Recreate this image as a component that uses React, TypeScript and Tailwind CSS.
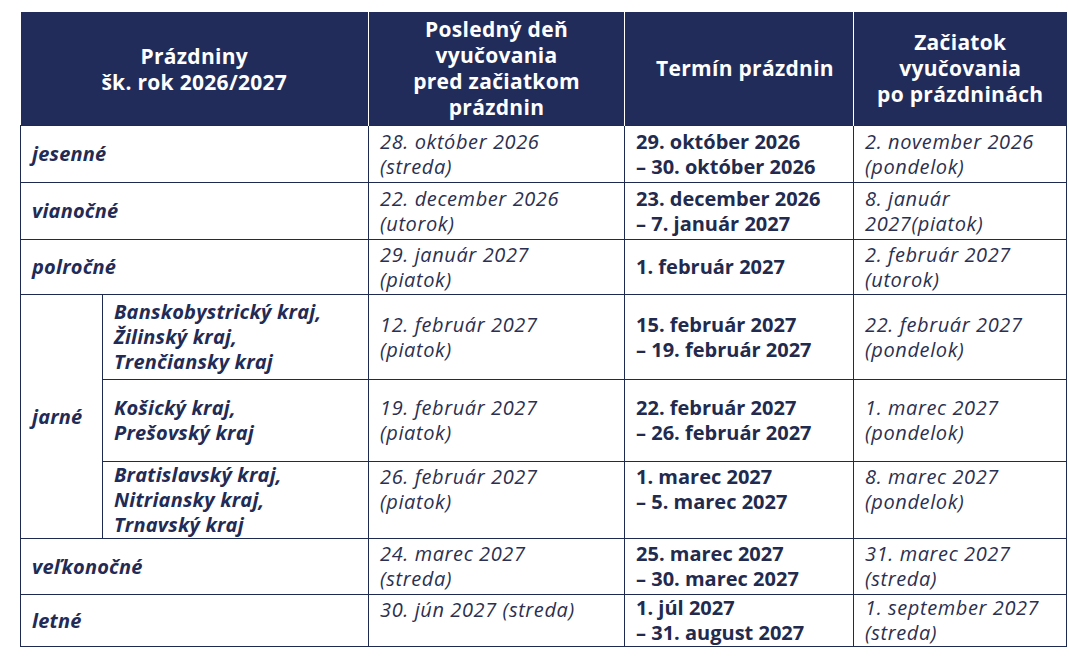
import React from "react";

const F = { fontFamily: '"Open Sans", "Liberation Sans", sans-serif' };

function It({ children }: { children: React.ReactNode }) {
  return <div className="italic text-[#2b3050] text-[20px] leading-[25px] tracking-[0.6px]">{children}</div>;
}
function Bd({ children }: { children: React.ReactNode }) {
  return <div className="font-bold text-[#222a4e] text-[20px] leading-[25px]">{children}</div>;
}
function Lb({ children }: { children: React.ReactNode }) {
  return <div className="font-bold italic text-[#222b55] text-[20px] leading-[25px] tracking-[0.2px]">{children}</div>;
}

const td = "border border-[#1e2a50] px-[11px] py-0 align-middle";
const tdTop = "border border-[#1e2a50] px-[11px] pt-[2px] pb-0 align-top";

export default function App() {
  return (
    <div className="w-[1069px] h-[657px] bg-white pt-[12px] pl-[20px]" style={F}>
      <table className="border-collapse table-fixed w-[1046px]">
        <colgroup>
          <col className="w-[82px]" />
          <col className="w-[266px]" />
          <col className="w-[256px]" />
          <col className="w-[229px]" />
          <col className="w-[213px]" />
        </colgroup>
        <thead>
          <tr className="h-[113px] bg-[#212c5b] text-white text-[21px] leading-[26px] tracking-[0.3px]">
            <th colSpan={2} className="border-r border-white font-bold pt-[2px]">
              Prázdniny
              <br />
              šk. rok 2026/2027
            </th>
            <th className="border-x border-white font-bold">
              Posledný deň
              <br />
              vyučovania
              <br />
              pred začiatkom
              <br />
              prázdnin
            </th>
            <th className="border-x border-white font-bold pl-[12px]">Termín prázdnin</th>
            <th className="border-l border-white font-bold">
              Začiatok
              <br />
              vyučovania
              <br />
              po prázdninách
            </th>
          </tr>
        </thead>
        <tbody>
          <tr className="h-[57px]">
            <td colSpan={2} className={td}><Lb>jesenné</Lb></td>
            <td className={td}><It>28. október 2026<br />(streda)</It></td>
            <td className={td}><Bd>29. október 2026<br />– 30. október 2026</Bd></td>
            <td className={td}><It>2. november 2026<br />(pondelok)</It></td>
          </tr>
          <tr className="h-[57px]">
            <td colSpan={2} className={td}><Lb>vianočné</Lb></td>
            <td className={td}><It>22. december 2026<br />(utorok)</It></td>
            <td className={td}><Bd>23. december 2026<br />– 7. január 2027</Bd></td>
            <td className={td}><It>8. január<br />2027(piatok)</It></td>
          </tr>
          <tr className="h-[55px]">
            <td colSpan={2} className={td}><Lb>polročné</Lb></td>
            <td className={td}><It>29. január 2027<br />(piatok)</It></td>
            <td className={td}><Bd>1. február 2027</Bd></td>
            <td className={td}><It>2. február 2027<br />(utorok)</It></td>
          </tr>
          <tr className="h-[85px]">
            <td rowSpan={3} className={td}><Lb>jarné</Lb></td>
            <td className={td}><Lb>Banskobystrický kraj,<br />Žilinský kraj,<br />Trenčiansky kraj</Lb></td>
            <td className={td}><It>12. február 2027<br />(piatok)</It></td>
            <td className={td}><Bd>15. február 2027<br />– 19. február 2027</Bd></td>
            <td className={td}><It>22. február 2027<br />(pondelok)</It></td>
          </tr>
          <tr className="h-[82px]">
            <td className={td}><Lb>Košický kraj,<br />Prešovský kraj</Lb></td>
            <td className={td}><It>19. február 2027<br />(piatok)</It></td>
            <td className={td}><Bd>22. február 2027<br />– 26. február 2027</Bd></td>
            <td className={td}><It>1. marec 2027<br />(pondelok)</It></td>
          </tr>
          <tr className="h-[77px]">
            <td className={td}><Lb>Bratislavský kraj,<br />Nitriansky kraj,<br />Trnavský kraj</Lb></td>
            <td className={tdTop}><It>26. február 2027<br />(piatok)</It></td>
            <td className={tdTop}><Bd>1. marec 2027<br />– 5. marec 2027</Bd></td>
            <td className={tdTop}><It>8. marec 2027<br />(pondelok)</It></td>
          </tr>
          <tr className="h-[56px]">
            <td colSpan={2} className={td}><Lb>veľkonočné</Lb></td>
            <td className={td}><It>24. marec 2027<br />(streda)</It></td>
            <td className={td}><Bd>25. marec 2027<br />– 30. marec 2027</Bd></td>
            <td className={td}><It>31. marec 2027<br />(streda)</It></td>
          </tr>
          <tr className="h-[52px]">
            <td colSpan={2} className={td}><Lb>letné</Lb></td>
            <td className={tdTop}><It>30. jún 2027 (streda)</It></td>
            <td className={td}><Bd>1. júl 2027<br />– 31. august 2027</Bd></td>
            <td className={td}><It>1. september 2027<br />(streda)</It></td>
          </tr>
        </tbody>
      </table>
    </div>
  );
}
